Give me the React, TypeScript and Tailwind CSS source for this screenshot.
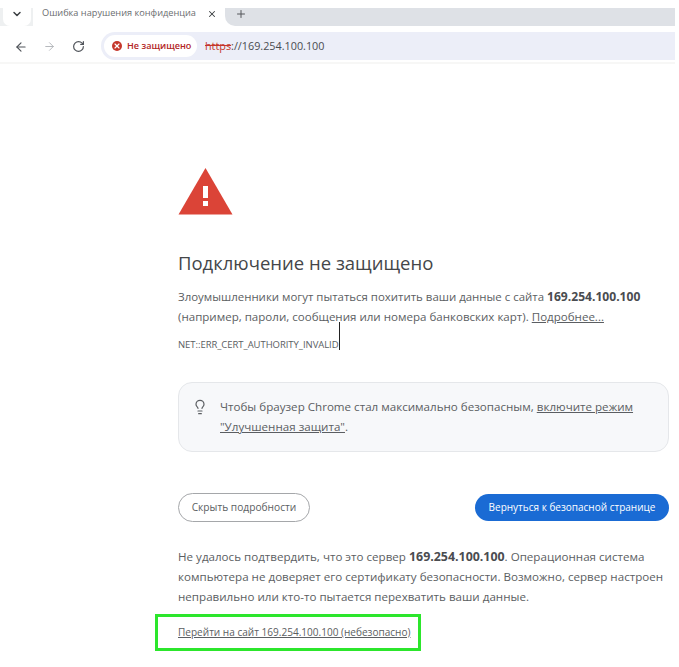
import { ArrowLeft, ArrowRight, RotateCw, Plus, X, ChevronDown, Lightbulb } from "lucide-react";

const font = { fontFamily: '"Open Sans", "Noto Sans", sans-serif' };

export default function App() {
  return (
    <div className="w-[679px] h-[667px] bg-white overflow-hidden font-['Open_Sans','Noto_Sans',sans-serif] text-[#5b5e62]">
      {/* tab strip */}
      <div className="pt-2 pr-1">
        <div className="flex h-[18px] items-stretch">
          <div className="w-[33px] pl-[3px] bg-[#eef0f1]">
            <div className="w-[28px] h-[18px] bg-white rounded-b-[7px] flex items-start justify-center">
              <ChevronDown size={12} strokeWidth={3} className="text-[#3c4043]" />
            </div>
          </div>
          <div className="w-[192px] bg-white flex items-start pl-[9px] pr-[8px]">
            <span className="text-[9.2px] leading-[10px] text-[#6a6d70] whitespace-nowrap w-[155px]">Ошибка нарушения конфиденциа</span>
            <X size={10} strokeWidth={2.5} className="text-[#3c4043] ml-[10px] mt-[1px]" />
          </div>
          <div className="flex-1 bg-[#dee1e6] rounded-bl-[10px] pl-[10px]">
            <Plus size={12} strokeWidth={2} className="text-[#54575b]" />
          </div>
        </div>
        {/* toolbar */}
        <div className="flex items-center h-[33px] mt-[5px] pl-[14px] border-b-2 border-[#f7f7f6]">
          <ArrowLeft size={14} strokeWidth={2} className="text-[#50545a]" />
          <ArrowRight size={13} strokeWidth={1.8} className="text-[#b4b7bb] ml-[15px]" />
          <RotateCw size={13} strokeWidth={2.2} className="text-[#50545a] ml-[16px]" />
          <div className="flex-1 ml-[16px] h-[28px] -mt-[1px] bg-[#eceef8] rounded-l-[14px] flex items-center pl-[3px]">
            <div className="h-[22px] w-[93px] bg-white rounded-full flex items-center pl-2 gap-[5px]">
              <span className="w-[10px] h-[10px] rounded-full bg-[#c5362b] flex items-center justify-center">
                <X size={8} strokeWidth={3.5} className="text-white" />
              </span>
              <span className="text-[9.1px] font-semibold text-[#b3261e] whitespace-nowrap">Не защищено</span>
            </div>
            <span className="ml-[8px] text-[10.8px] text-[#4a4c50] whitespace-nowrap">
              <span className="text-[#c5362b] line-through">https</span>://169.254.100.100
            </span>
          </div>
        </div>
      </div>

      {/* page */}
      <main className="ml-[178px] w-[491px] pt-[103px]" style={font}>
        <svg width="55" height="48" viewBox="0 0 55 48" className="block">
          <path d="M27.5 1 L54.5 47.5 H0.5 Z" fill="#db4437" />
          <rect x="25" y="19" width="5" height="12" fill="#fff" />
          <rect x="25" y="34" width="5" height="5" fill="#fff" />
        </svg>
        <h1 className="mt-[35px] text-[18.5px] leading-[26px] text-[#444649]">Подключение не защищено</h1>
        <p className="mt-[11px] text-[11.45px] leading-[20px] whitespace-nowrap">
          Злоумышленники могут пытаться похитить ваши данные с сайта <b className="text-[12.1px] font-bold text-[#4a4c50]">169.254.100.100</b>
          <br />
          <span className="text-[11.55px]">(например, пароли, сообщения или номера банковских карт). <span className="underline">Подробнее...</span></span>
        </p>
        <div className="relative mt-[11px] text-[9.5px] leading-[14px] tracking-[-0.05px]">
          NET::ERR_CERT_AUTHORITY_INVALID
          <span className="absolute left-[161px] -top-[16px] w-px h-[28px] bg-[#222]" />
        </div>

        <div className="mt-[30px] h-[70px] rounded-[14px] border border-[#e5e7ea] bg-[#f7f8fa] flex pl-[13px] pt-[14px]">
          <Lightbulb size={16} strokeWidth={1.8} className="text-[#5b5e62] mt-[2px] shrink-0" />
          <p className="ml-[12px] text-[11.6px] leading-[20px] whitespace-nowrap">
            Чтобы браузер Chrome стал максимально безопасным, <span className="underline">включите режим</span>
            <br />
            <span className="underline">"Улучшенная защита"</span>.
          </p>
        </div>

        <div className="mt-[41px] flex items-center justify-between">
          <button className="h-[29px] w-[132px] rounded-full border border-[#a5a7aa] bg-white text-[10.2px] text-[#5b5e62]">Скрыть подробности</button>
          <button className="h-[27px] w-[194px] rounded-full bg-[#1a6bd4] text-[10px] font-medium text-white">Вернуться к безопасной странице</button>
        </div>

        <p className="mt-[25px] text-[11.6px] leading-[20px] whitespace-nowrap">
          Не удалось подтвердить, что это сервер <b className="text-[12.4px] font-bold text-[#4a4c50]">169.254.100.100</b>. Операционная система
          <br />
          компьютера не доверяет его сертификату безопасности. Возможно, сервер настроен
          <br />
          неправильно или кто-то пытается перехватить ваши данные.
        </p>
      </main>
      <div className="ml-[155px] mt-[7px] w-[266px] h-[37px] border-[3px] border-[#2ce62c] flex items-center pl-[20px]" style={font}>
        <span className="text-[10.05px] underline whitespace-nowrap text-[#5b5e62]">Перейти на сайт 169.254.100.100 (небезопасно)</span>
      </div>
    </div>
  );
}
